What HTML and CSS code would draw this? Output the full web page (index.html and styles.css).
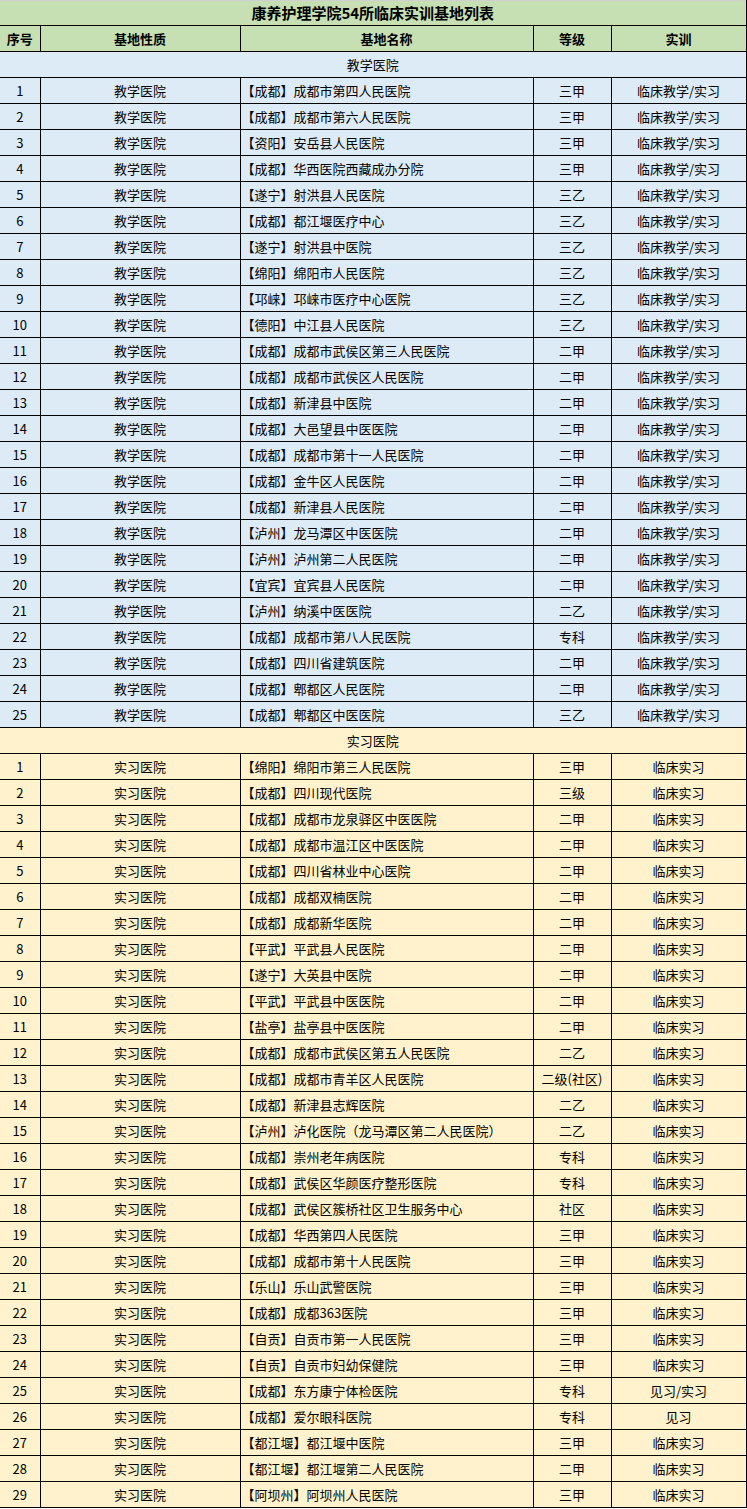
FILE: index.html
```html
<!DOCTYPE html>
<html lang="zh-CN">
<head>
<meta charset="utf-8">
<title>康养护理学院54所临床实训基地列表</title>
<link rel="stylesheet" href="styles.css">
</head>
<body>
<table class="sheet">
<colgroup>
<col class="c-no"><col class="c-type"><col class="c-name"><col class="c-level"><col class="c-train">
</colgroup>
<tbody>
<tr class="title"><td colspan="5">康养护理学院54所临床实训基地列表</td></tr>
<tr class="head"><td>序号</td><td>基地性质</td><td>基地名称</td><td>等级</td><td>实训</td></tr>
<tr class="sec blue"><td colspan="5">教学医院</td></tr>
<tr class="blue"><td>1</td><td>教学医院</td><td class="name">【成都】成都市第四人民医院</td><td>三甲</td><td>临床教学/实习</td></tr>
<tr class="blue"><td>2</td><td>教学医院</td><td class="name">【成都】成都市第六人民医院</td><td>三甲</td><td>临床教学/实习</td></tr>
<tr class="blue"><td>3</td><td>教学医院</td><td class="name">【资阳】安岳县人民医院</td><td>三甲</td><td>临床教学/实习</td></tr>
<tr class="blue"><td>4</td><td>教学医院</td><td class="name">【成都】华西医院西藏成办分院</td><td>三甲</td><td>临床教学/实习</td></tr>
<tr class="blue"><td>5</td><td>教学医院</td><td class="name">【遂宁】射洪县人民医院</td><td>三乙</td><td>临床教学/实习</td></tr>
<tr class="blue"><td>6</td><td>教学医院</td><td class="name">【成都】都江堰医疗中心</td><td>三乙</td><td>临床教学/实习</td></tr>
<tr class="blue"><td>7</td><td>教学医院</td><td class="name">【遂宁】射洪县中医院</td><td>三乙</td><td>临床教学/实习</td></tr>
<tr class="blue"><td>8</td><td>教学医院</td><td class="name">【绵阳】绵阳市人民医院</td><td>三乙</td><td>临床教学/实习</td></tr>
<tr class="blue"><td>9</td><td>教学医院</td><td class="name">【邛崃】邛崃市医疗中心医院</td><td>三乙</td><td>临床教学/实习</td></tr>
<tr class="blue"><td>10</td><td>教学医院</td><td class="name">【德阳】中江县人民医院</td><td>三乙</td><td>临床教学/实习</td></tr>
<tr class="blue"><td>11</td><td>教学医院</td><td class="name">【成都】成都市武侯区第三人民医院</td><td>二甲</td><td>临床教学/实习</td></tr>
<tr class="blue"><td>12</td><td>教学医院</td><td class="name">【成都】成都市武侯区人民医院</td><td>二甲</td><td>临床教学/实习</td></tr>
<tr class="blue"><td>13</td><td>教学医院</td><td class="name">【成都】新津县中医院</td><td>二甲</td><td>临床教学/实习</td></tr>
<tr class="blue"><td>14</td><td>教学医院</td><td class="name">【成都】大邑望县中医医院</td><td>二甲</td><td>临床教学/实习</td></tr>
<tr class="blue"><td>15</td><td>教学医院</td><td class="name">【成都】成都市第十一人民医院</td><td>二甲</td><td>临床教学/实习</td></tr>
<tr class="blue"><td>16</td><td>教学医院</td><td class="name">【成都】金牛区人民医院</td><td>二甲</td><td>临床教学/实习</td></tr>
<tr class="blue"><td>17</td><td>教学医院</td><td class="name">【成都】新津县人民医院</td><td>二甲</td><td>临床教学/实习</td></tr>
<tr class="blue"><td>18</td><td>教学医院</td><td class="name">【泸州】龙马潭区中医医院</td><td>二甲</td><td>临床教学/实习</td></tr>
<tr class="blue"><td>19</td><td>教学医院</td><td class="name">【泸州】泸州第二人民医院</td><td>二甲</td><td>临床教学/实习</td></tr>
<tr class="blue"><td>20</td><td>教学医院</td><td class="name">【宜宾】宜宾县人民医院</td><td>二甲</td><td>临床教学/实习</td></tr>
<tr class="blue"><td>21</td><td>教学医院</td><td class="name">【泸州】纳溪中医医院</td><td>二乙</td><td>临床教学/实习</td></tr>
<tr class="blue"><td>22</td><td>教学医院</td><td class="name">【成都】成都市第八人民医院</td><td>专科</td><td>临床教学/实习</td></tr>
<tr class="blue"><td>23</td><td>教学医院</td><td class="name">【成都】四川省建筑医院</td><td>二甲</td><td>临床教学/实习</td></tr>
<tr class="blue"><td>24</td><td>教学医院</td><td class="name">【成都】郫都区人民医院</td><td>二甲</td><td>临床教学/实习</td></tr>
<tr class="blue"><td>25</td><td>教学医院</td><td class="name">【成都】郫都区中医医院</td><td>三乙</td><td>临床教学/实习</td></tr>
<tr class="sec yellow"><td colspan="5">实习医院</td></tr>
<tr class="yellow"><td>1</td><td>实习医院</td><td class="name">【绵阳】绵阳市第三人民医院</td><td>三甲</td><td>临床实习</td></tr>
<tr class="yellow"><td>2</td><td>实习医院</td><td class="name">【成都】四川现代医院</td><td>三级</td><td>临床实习</td></tr>
<tr class="yellow"><td>3</td><td>实习医院</td><td class="name">【成都】成都市龙泉驿区中医医院</td><td>二甲</td><td>临床实习</td></tr>
<tr class="yellow"><td>4</td><td>实习医院</td><td class="name">【成都】成都市温江区中医医院</td><td>二甲</td><td>临床实习</td></tr>
<tr class="yellow"><td>5</td><td>实习医院</td><td class="name">【成都】四川省林业中心医院</td><td>二甲</td><td>临床实习</td></tr>
<tr class="yellow"><td>6</td><td>实习医院</td><td class="name">【成都】成都双楠医院</td><td>二甲</td><td>临床实习</td></tr>
<tr class="yellow"><td>7</td><td>实习医院</td><td class="name">【成都】成都新华医院</td><td>二甲</td><td>临床实习</td></tr>
<tr class="yellow"><td>8</td><td>实习医院</td><td class="name">【平武】平武县人民医院</td><td>二甲</td><td>临床实习</td></tr>
<tr class="yellow"><td>9</td><td>实习医院</td><td class="name">【遂宁】大英县中医院</td><td>二甲</td><td>临床实习</td></tr>
<tr class="yellow"><td>10</td><td>实习医院</td><td class="name">【平武】平武县中医医院</td><td>二甲</td><td>临床实习</td></tr>
<tr class="yellow"><td>11</td><td>实习医院</td><td class="name">【盐亭】盐亭县中医医院</td><td>二甲</td><td>临床实习</td></tr>
<tr class="yellow"><td>12</td><td>实习医院</td><td class="name">【成都】成都市武侯区第五人民医院</td><td>二乙</td><td>临床实习</td></tr>
<tr class="yellow"><td>13</td><td>实习医院</td><td class="name">【成都】成都市青羊区人民医院</td><td>二级(社区)</td><td>临床实习</td></tr>
<tr class="yellow"><td>14</td><td>实习医院</td><td class="name">【成都】新津县志辉医院</td><td>二乙</td><td>临床实习</td></tr>
<tr class="yellow"><td>15</td><td>实习医院</td><td class="name">【泸州】泸化医院（龙马潭区第二人民医院）</td><td>二乙</td><td>临床实习</td></tr>
<tr class="yellow"><td>16</td><td>实习医院</td><td class="name">【成都】崇州老年病医院</td><td>专科</td><td>临床实习</td></tr>
<tr class="yellow"><td>17</td><td>实习医院</td><td class="name">【成都】武侯区华颜医疗整形医院</td><td>专科</td><td>临床实习</td></tr>
<tr class="yellow"><td>18</td><td>实习医院</td><td class="name">【成都】武侯区簇桥社区卫生服务中心</td><td>社区</td><td>临床实习</td></tr>
<tr class="yellow"><td>19</td><td>实习医院</td><td class="name">【成都】华西第四人民医院</td><td>三甲</td><td>临床实习</td></tr>
<tr class="yellow"><td>20</td><td>实习医院</td><td class="name">【成都】成都市第十人民医院</td><td>三甲</td><td>临床实习</td></tr>
<tr class="yellow"><td>21</td><td>实习医院</td><td class="name">【乐山】乐山武警医院</td><td>三甲</td><td>临床实习</td></tr>
<tr class="yellow"><td>22</td><td>实习医院</td><td class="name">【成都】成都363医院</td><td>三甲</td><td>临床实习</td></tr>
<tr class="yellow"><td>23</td><td>实习医院</td><td class="name">【自贡】自贡市第一人民医院</td><td>三甲</td><td>临床实习</td></tr>
<tr class="yellow"><td>24</td><td>实习医院</td><td class="name">【自贡】自贡市妇幼保健院</td><td>三甲</td><td>临床实习</td></tr>
<tr class="yellow"><td>25</td><td>实习医院</td><td class="name">【成都】东方康宁体检医院</td><td>专科</td><td>见习/实习</td></tr>
<tr class="yellow"><td>26</td><td>实习医院</td><td class="name">【成都】爱尔眼科医院</td><td>专科</td><td>见习</td></tr>
<tr class="yellow"><td>27</td><td>实习医院</td><td class="name">【都江堰】都江堰中医院</td><td>三甲</td><td>临床实习</td></tr>
<tr class="yellow"><td>28</td><td>实习医院</td><td class="name">【都江堰】都江堰第二人民医院</td><td>二甲</td><td>临床实习</td></tr>
<tr class="yellow"><td>29</td><td>实习医院</td><td class="name">【阿坝州】阿坝州人民医院</td><td>三甲</td><td>临床实习</td></tr>
</tbody>
</table>
</body>
</html>
```
FILE: styles.css
```css
html, body {
  margin: 0;
  padding: 0;
  background: #ffffff;
}

.sheet {
  border-collapse: collapse;
  table-layout: fixed;
  width: 746px;
  font-family: "Noto Sans CJK SC", "Noto Sans", sans-serif;
  font-size: 13px;
  color: #000;
}

.c-no { width: 40px; }
.c-type { width: 200px; }
.c-name { width: 293px; }
.c-level { width: 78px; }
.c-train { width: 135px; }

.sheet td {
  border: 1px solid #000;
  height: 25px;
  padding: 0;
  line-height: 16px;
  text-align: center;
  vertical-align: middle;
  white-space: nowrap;
  overflow: hidden;
}

.sheet tr td:first-child {
  border-left: none;
}

.sheet td.name {
  text-align: left;
  padding-left: 1px;
}

.title td {
  background: #c6e0b4;
  border-top: 1px solid #d0d0d0;
  font-weight: bold;
  font-size: 15px;
  height: 24px;
}

.head td {
  background: #c6e0b4;
  font-weight: bold;
}

.blue td {
  background: #ddebf7;
}

.yellow td {
  background: #fff2cc;
}
```
